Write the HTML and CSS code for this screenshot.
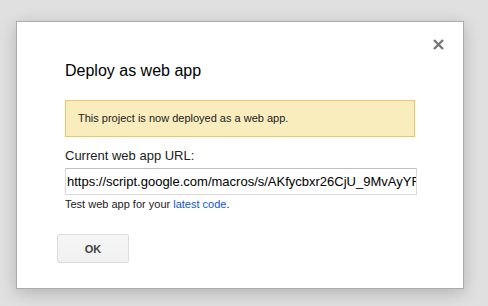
FILE: index.html
```html
<!DOCTYPE html>
<html>
<head>
<meta charset="utf-8">
<link rel="stylesheet" href="styles.css">
</head>
<body>
<div class="dialog">
  <button class="close" aria-label="Close">
    <svg width="11" height="11" viewBox="0 0 11 11"><path d="M1 1 L10 10 M10 1 L1 10" stroke="#777" stroke-width="2.4" fill="none"/></svg>
  </button>
  <h1 class="title">Deploy as web app</h1>
  <div class="notice">This project is now deployed as a web app.</div>
  <div class="label">Current web app URL:</div>
  <input class="url" type="text" value="https://script.google.com/macros/s/AKfycbxr26CjU_9MvAyYFGd5wl0vbRk7Wtbx4Kzq2G8lj0qk/exec">
  <div class="hint">Test web app for your <a href="#">latest code</a>.</div>
  <div class="buttons"><button class="ok">OK</button></div>
</div>
</body>
</html>
```
FILE: styles.css
```css
html, body {
  margin: 0;
  padding: 0;
  background: #e0e0e0;
  font-family: Arial, "Liberation Sans", sans-serif;
}
body {
  padding: 21px 0 0 16px;
  height: 306px;
  box-sizing: border-box;
  overflow: hidden;
}
.dialog {
  position: relative;
  width: 398px;
  height: 227px;
  background: #fff;
  border: 1px solid #acacac;
  box-shadow: 0 4px 16px rgba(0,0,0,0.2);
  padding: 39px 0 0 48px;
  box-sizing: content-box;
}
.close {
  position: absolute;
  top: 17px;
  right: 19px;
  width: 11px;
  height: 11px;
  padding: 0;
  border: 0;
  background: none;
  display: block;
}
.close svg { display: block; }
.title {
  margin: 0;
  font-size: 16px;
  line-height: 20px;
  font-weight: normal;
  color: #000;
}
.notice {
  margin-top: 19px;
  width: 324px;
  padding: 11px 12px;
  background: #f9edbe;
  border: 1px solid #f0c36d;
  font-size: 11px;
  line-height: 13px;
  color: #222;
}
.label {
  margin-top: 11px;
  font-size: 13px;
  line-height: 16px;
  color: #222;
}
.url {
  display: block;
  margin: 4px 0 0;
  box-sizing: border-box;
  width: 352px;
  height: 27px;
  padding: 0 0 0 1px;
  border: 1px solid #d9d9d9;
  border-top-color: #c0c0c0;
  font-family: Arial, "Liberation Sans", sans-serif;
  font-size: 13px;
  color: #000;
  outline: none;
}
.hint {
  margin-top: 3px;
  font-size: 11px;
  line-height: 13px;
  color: #222;
}
.hint a {
  color: #15c;
  text-decoration: none;
}
.buttons {
  margin-top: 23px;
  margin-left: -8px;
}
.ok {
  width: 72px;
  height: 29px;
  box-sizing: border-box;
  border: 1px solid #dcdcdc;
  border-radius: 2px;
  background: linear-gradient(#f5f5f5, #f1f1f1);
  color: #444;
  font-family: Arial, "Liberation Sans", sans-serif;
  font-weight: bold;
  font-size: 11px;
  padding: 0;
}
```
